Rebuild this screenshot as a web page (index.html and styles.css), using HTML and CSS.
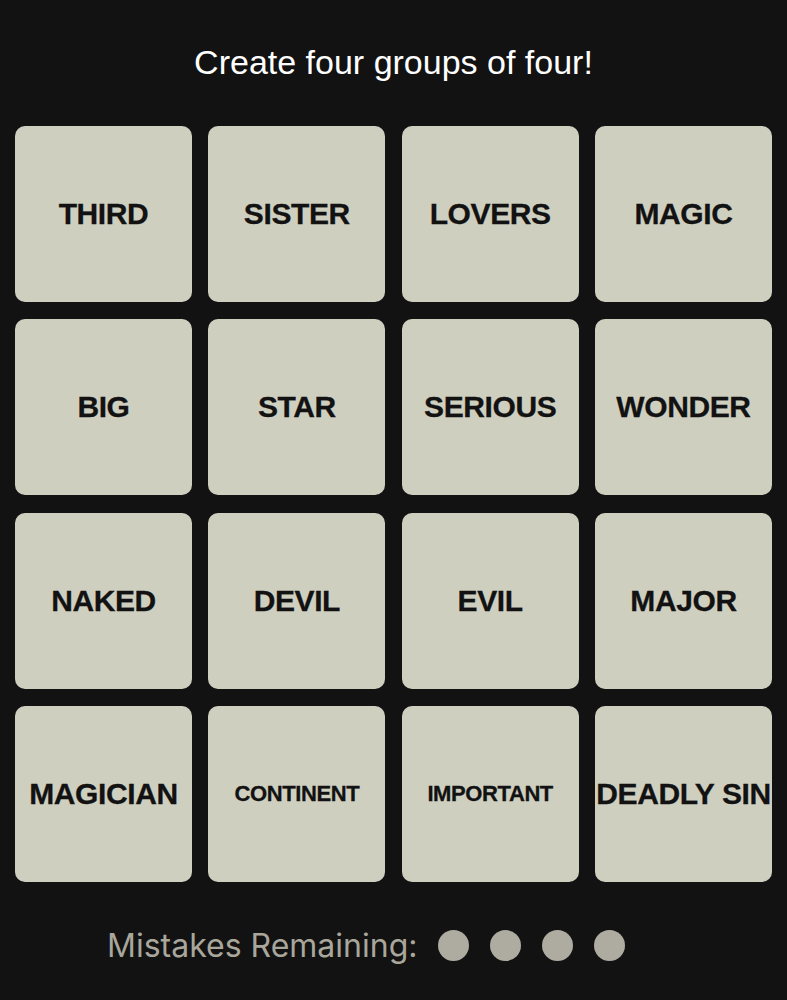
FILE: index.html
```html
<!DOCTYPE html>
<html>
<head>
<meta charset="utf-8">
<link rel="stylesheet" href="styles.css">
</head>
<body>
<div class="page">
  <h1 class="title">Create four groups of four!</h1>
  <div class="grid">
    <div class="tile">THIRD</div>
    <div class="tile">SISTER</div>
    <div class="tile">LOVERS</div>
    <div class="tile">MAGIC</div>
    <div class="tile">BIG</div>
    <div class="tile">STAR</div>
    <div class="tile">SERIOUS</div>
    <div class="tile">WONDER</div>
    <div class="tile">NAKED</div>
    <div class="tile">DEVIL</div>
    <div class="tile">EVIL</div>
    <div class="tile">MAJOR</div>
    <div class="tile">MAGICIAN</div>
    <div class="tile small">CONTINENT</div>
    <div class="tile small">IMPORTANT</div>
    <div class="tile">DEADLY SIN</div>
  </div>
  <div class="mistakes">
    <span class="label">Mistakes Remaining:</span>
    <span class="dots">
      <span class="dot"></span>
      <span class="dot"></span>
      <span class="dot"></span>
      <span class="dot"></span>
    </span>
  </div>
</div>
</body>
</html>
```
FILE: styles.css
```css
html, body {
  margin: 0;
  padding: 0;
  background: #121212;
}
body {
  font-family: "Liberation Sans", Arial, sans-serif;
}
.page {
  width: 787px;
  height: 1000px;
  overflow: hidden;
}
.title {
  margin: 0;
  padding-top: 42px;
  height: 40px;
  line-height: 40px;
  font-size: 34px;
  font-weight: normal;
  color: #ffffff;
  text-align: center;
  margin-bottom: 44px;
}
.grid {
  margin: 0 15px;
  display: grid;
  grid-template-columns: repeat(4, 1fr);
  grid-auto-rows: 176px;
  column-gap: 16.33px;
  row-gap: 17.33px;
}
.tile {
  background: #cfcfc0;
  border-radius: 10px;
  display: flex;
  align-items: center;
  justify-content: center;
  color: #121212;
  font-weight: bold;
  font-size: 30px;
  white-space: nowrap;
  letter-spacing: -0.4px;
  -webkit-text-stroke: 0.3px #121212;
}
.tile.small {
  font-size: 22px;
}
.mistakes {
  margin-top: 46px;
  height: 36px;
  display: flex;
  align-items: center;
  padding-left: 107px;
  gap: 21px;
}
.label {
  font-family: Inter, "Liberation Sans", sans-serif;
  font-size: 32px;
  color: #a9a69c;
  line-height: 36px;
}
.dots {
  display: flex;
  gap: 21px;
}
.dot {
  width: 31px;
  height: 31px;
  border-radius: 50%;
  background: #aeaba1;
}
```
